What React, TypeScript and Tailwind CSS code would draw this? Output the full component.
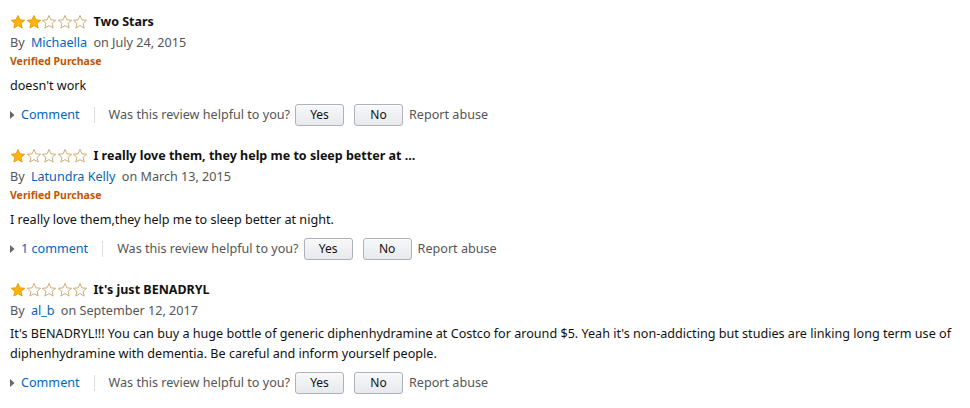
import React from "react";

const Star = ({ filled }: { filled: boolean }) => (
  <svg width="16" height="16" viewBox="0 0 24 24" className="-mr-[0.5px]">
    <path
      d="M12 2.2l2.9 6.6 7.1.6-5.4 4.7 1.6 7-6.2-3.7-6.2 3.7 1.6-7L2 9.4l7.1-.6z"
      fill={filled ? "#ffb310" : "#ffffff"}
      stroke={filled ? "#e49a00" : "#c8a86a"}
      strokeWidth="1.4"
      strokeLinejoin="round"
    />
  </svg>
);

type Review = {
  stars: number;
  title: string;
  author: string;
  date: string;
  verified: boolean;
  body: string;
  comment: string;
};

const reviews: Review[] = [
  {
    stars: 2,
    title: "Two Stars",
    author: "Michaella",
    date: "July 24, 2015",
    verified: true,
    body: "doesn't work",
    comment: "Comment",
  },
  {
    stars: 1,
    title: "I really love them, they help me to sleep better at ...",
    author: "Latundra Kelly",
    date: "March 13, 2015",
    verified: true,
    body: "I really love them,they help me to sleep better at night.",
    comment: "1 comment",
  },
  {
    stars: 1,
    title: "It's just BENADRYL",
    author: "al_b",
    date: "September 12, 2017",
    verified: false,
    body: "It's BENADRYL!!! You can buy a huge bottle of generic diphenhydramine at Costco for around $5. Yeah it's non-addicting but studies are linking long term use of diphenhydramine with dementia. Be careful and inform yourself people.",
    comment: "Comment",
  },
];

const Btn = ({ children }: { children: React.ReactNode }) => (
  <button className="h-[22px] w-[49px] rounded-[3px] border border-[#adb1b8] bg-gradient-to-b from-[#f7f8fa] to-[#e7e9ec] text-[12px] leading-[20px] text-[#111] shadow-[inset_0_1px_0_rgba(255,255,255,0.6)]">
    {children}
  </button>
);

function ReviewBlock({ r }: { r: Review }) {
  return (
    <div className="pb-[19px]">
      <div className="flex items-center h-[22px]">
        <div className="flex items-center">
          {[0, 1, 2, 3, 4].map((i) => (
            <Star key={i} filled={i < r.stars} />
          ))}
        </div>
        <span className="ml-[6px] text-[12.5px] font-bold text-[#111]">{r.title}</span>
      </div>
      <div className="h-[19px] leading-[19px] text-[12.6px] text-[#555]">
        By <span className="ml-[3px] text-[#0066c0]">{r.author}</span>{" "}
        <span className="ml-[3px]">on {r.date}</span>
      </div>
      {r.verified ? (
        <div className="h-[19px] leading-[19px] text-[10.5px] font-bold text-[#c45500]">
          Verified Purchase
        </div>
      ) : null}
      <div className={`${r.verified ? "mt-[5px]" : "mt-[4px]"} text-[12.6px] leading-[20px] text-[#111]`}>
        {r.body}
      </div>
      <div className="mt-[8px] flex items-center h-[22px] text-[12.6px]">
        <svg width="5" height="8" viewBox="0 0 5 8" className="mr-[6px]">
          <path d="M0 0 L4.5 4 L0 8 Z" fill="#666" />
        </svg>
        <span className="text-[#0066c0]">{r.comment}</span>
        <span className="mx-[14px] h-[16px] w-px bg-[#ddd]" />
        <span className="text-[#555] mr-[5px]">Was this review helpful to you?</span>
        <Btn>Yes</Btn>
        <span className="w-[10px]" />
        <Btn>No</Btn>
        <span className="ml-[6px] text-[#555]">Report abuse</span>
      </div>
    </div>
  );
}

export default function App() {
  return (
    <div
      className="w-[970px] h-[408px] bg-white pl-[10px] pr-[10px] pt-[11px] overflow-hidden"
      style={{ fontFamily: '"Noto Sans", Arial, sans-serif' }}
    >
      {reviews.map((r, i) => (
        <ReviewBlock key={i} r={r} />
      ))}
    </div>
  );
}
